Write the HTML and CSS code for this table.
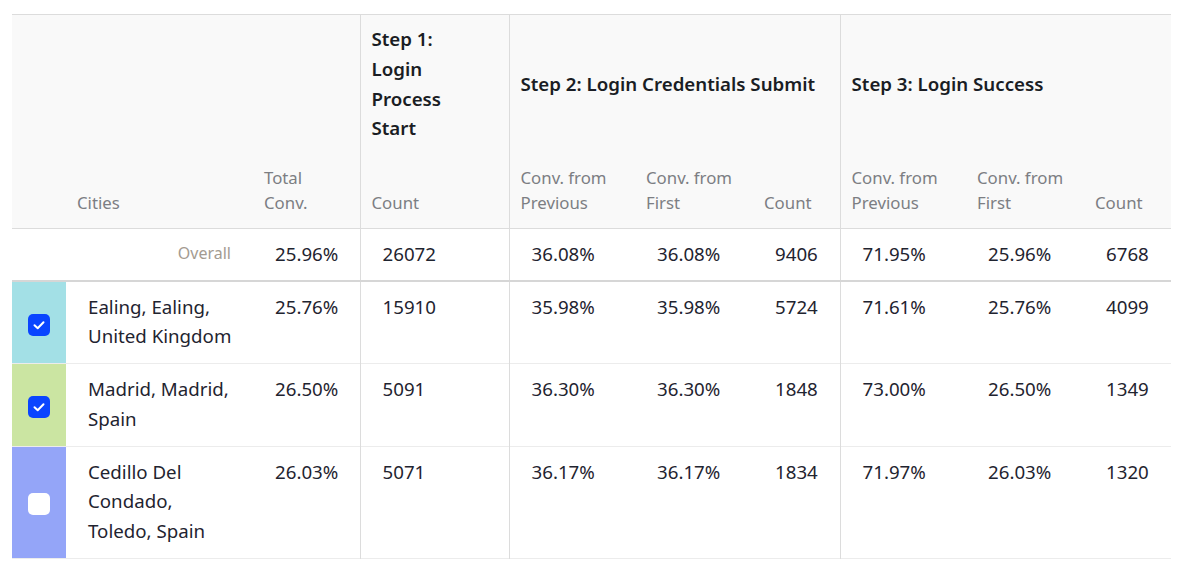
FILE: index.html
```html
<!DOCTYPE html>
<html>
<head>
<meta charset="utf-8">
<link rel="stylesheet" href="styles.css">
</head>
<body>
<table class="funnel">
  <colgroup>
    <col class="c-sw"><col class="c-city"><col class="c-total"><col class="c-s1">
    <col class="c-prev"><col class="c-first"><col class="c-count">
    <col class="c-prev"><col class="c-first"><col class="c-count">
  </colgroup>
  <thead>
    <tr class="h1">
      <th></th><th></th><th></th>
      <th class="step sep">Step 1:<br>Login<br>Process<br>Start</th>
      <th class="step sep" colspan="3">Step 2: Login Credentials Submit</th>
      <th class="step sep" colspan="3">Step 3: Login Success</th>
    </tr>
    <tr class="h2">
      <th></th>
      <th class="sub">Cities</th>
      <th class="sub">Total<br>Conv.</th>
      <th class="sub sep">Count</th>
      <th class="sub sep">Conv. from<br>Previous</th>
      <th class="sub">Conv. from<br>First</th>
      <th class="sub">Count</th>
      <th class="sub sep">Conv. from<br>Previous</th>
      <th class="sub">Conv. from<br>First</th>
      <th class="sub">Count</th>
    </tr>
  </thead>
  <tbody>
    <tr class="overall">
      <td class="ov-label" colspan="2">Overall</td>
      <td>25.96%</td>
      <td class="sep">26072</td>
      <td class="sep">36.08%</td><td>36.08%</td><td>9406</td>
      <td class="sep">71.95%</td><td>25.96%</td><td>6768</td>
    </tr>
    <tr class="city">
      <td class="sw sw-cyan"><span class="cb on"><svg viewBox="0 0 22 22"><path d="M6.5 11.2l3.2 3.1 5.8-6" /></svg></span></td>
      <td class="name">Ealing, Ealing,<br>United Kingdom</td>
      <td>25.76%</td>
      <td class="sep">15910</td>
      <td class="sep">35.98%</td><td>35.98%</td><td>5724</td>
      <td class="sep">71.61%</td><td>25.76%</td><td>4099</td>
    </tr>
    <tr class="city">
      <td class="sw sw-green"><span class="cb on"><svg viewBox="0 0 22 22"><path d="M6.5 11.2l3.2 3.1 5.8-6" /></svg></span></td>
      <td class="name">Madrid, Madrid,<br>Spain</td>
      <td>26.50%</td>
      <td class="sep">5091</td>
      <td class="sep">36.30%</td><td>36.30%</td><td>1848</td>
      <td class="sep">73.00%</td><td>26.50%</td><td>1349</td>
    </tr>
    <tr class="city">
      <td class="sw sw-blue"><span class="cb"></span></td>
      <td class="name">Cedillo Del<br>Condado,<br>Toledo, Spain</td>
      <td>26.03%</td>
      <td class="sep">5071</td>
      <td class="sep">36.17%</td><td>36.17%</td><td>1834</td>
      <td class="sep">71.97%</td><td>26.03%</td><td>1320</td>
    </tr>
  </tbody>
</table>
</body>
</html>
```

FILE: styles.css
```css
html, body {
  margin: 0;
  padding: 0;
  background: #ffffff;
}
body {
  padding: 14px 14px 0 12px;
  font-family: "Noto Sans", "Open Sans", sans-serif;
  color: #1f2430;
}
.funnel {
  border-collapse: collapse;
  table-layout: fixed;
  width: 1159px;
}
.c-sw { width: 54px; }
.c-city { width: 187px; }
.c-total { width: 107px; }
.c-s1 { width: 149px; }
.c-prev { width: 126px; }
.c-first { width: 118px; }
.c-count { width: 87px; }

thead tr { background: #f9f9f9; }
thead tr.h1 { border-top: 1px solid #dcdcdc; }
thead tr.h2 { border-bottom: 1px solid #dcdcdc; }
th {
  text-align: left;
  font-weight: 400;
  padding: 0 11px;
}
.h1 th { height: 140px; padding-top: 9px; padding-bottom: 11px; box-sizing: border-box; }
.step {
  font-size: 18.7px;
  font-weight: 600;
  line-height: 29.7px;
  vertical-align: middle;
  color: #1a1d24;
}
.h2 th {
  vertical-align: bottom;
  padding-top: 10px;
  padding-bottom: 13px;
}
.sub {
  font-size: 16.8px;
  line-height: 25px;
  color: #7c7e83;
}
.sep { border-left: 1px solid #dcdcdc; }

td {
  font-size: 18.7px;
  line-height: 29.7px;
  padding: 10px 8px 12px 22px;
  vertical-align: top;
  color: #1f2430;
}
tr.overall td { padding-top: 10px; padding-bottom: 11.5px; }
tr.overall { border-bottom: 2px solid #d6d6d6; }
tr.city { border-bottom: 1px solid #ececec; }
tr.city td { padding-top: 10px; padding-bottom: 12px; }
.ov-label {
  text-align: right;
  font-size: 16px;
  color: #a39b91;
}
tr.overall td.ov-label { padding-right: 22px; }
.sw {
  text-align: center;
}
tr.city td.sw { padding: 0; vertical-align: middle; }
.sw-cyan { background: #a3e0e6; }
.sw-green { background: #cbe5a2; }
.sw-blue { background: #94a5f8; }
.cb {
  display: inline-block;
  width: 22px;
  height: 22px;
  border-radius: 5px;
  background: #ffffff;
  vertical-align: middle;
}
.cb.on { background: #0a45ff; }
.cb svg {
  display: block;
  width: 22px;
  height: 22px;
}
.cb path {
  fill: none;
  stroke: #ffffff;
  stroke-width: 2;
  stroke-linecap: round;
  stroke-linejoin: round;
}
```
